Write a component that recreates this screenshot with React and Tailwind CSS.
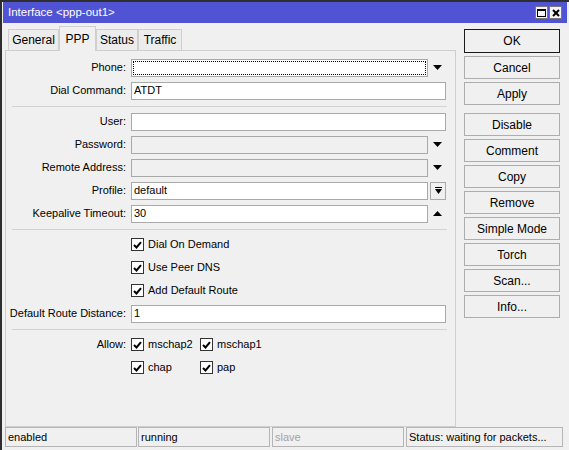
import React from "react";

/* SMALL DRAWINGS */
const DownArrow = () => (
  <svg width="9" height="5" viewBox="0 0 9 5">
    <polygon points="0,0 9,0 4.5,5" fill="#000" />
  </svg>
);

const UpArrow = () => (
  <svg width="9" height="5" viewBox="0 0 9 5">
    <polygon points="0,5 9,5 4.5,0" fill="#000" />
  </svg>
);

const CheckBox = () => (
  <span className="w-[13px] h-[13px] bg-white border border-[#333] flex items-center justify-center shrink-0">
    <svg width="9" height="8" viewBox="0 0 9 8">
      <path d="M1 4 L3.5 6.5 L8 1.2" stroke="#000" strokeWidth="2" fill="none" />
    </svg>
  </span>
);

const tabs = [
  { name: "General", w: "w-[51px]" },
  { name: "PPP", w: "w-[37px]", active: true },
  { name: "Status", w: "w-[42px]" },
  { name: "Traffic", w: "w-[44px]" },
];

const buttons = [
  ["Cancel", "mt-[3px]"],
  ["Apply", "mt-[3px]"],
  ["Disable", "mt-[8px]"],
  ["Comment", "mt-[3px]"],
  ["Copy", "mt-[3px]"],
  ["Remove", "mt-[3px]"],
  ["Simple Mode", "mt-[3px]"],
  ["Torch", "mt-[3px]"],
  ["Scan...", "mt-[3px]"],
  ["Info...", "mt-[3px]"],
];

/* ROW PIECES */
const Label = ({ children }) => (
  <span className="w-[121px] text-right shrink-0 pr-[1px]">{children}</span>
);

const Row = ({ label, children }) => (
  <div className="h-[23px] flex items-center">
    <Label>{label}</Label>
    <div className="flex-1 flex items-center ml-[4px] mr-[9px]">{children}</div>
  </div>
);

const Field = ({ value = "", disabled, focus }) => (
  <div
    className={`flex-1 h-[18px] border border-[#a9a9a9] flex items-center ${
      disabled ? "bg-[#f0f0f0]" : "bg-white"
    }`}
  >
    {focus ? (
      <div className="flex-1 self-stretch m-[1px] border border-dotted border-black" />
    ) : (
      <span className="pl-[2px]">{value}</span>
    )}
  </div>
);

const Separator = () => (
  <div className="h-[8px] flex items-center ml-[6px] mr-[8px]">
    <div className="flex-1 h-[1px] bg-[#d3d3d3]" />
  </div>
);

const CheckRow = ({ text }) => (
  <div className="h-[23px] flex items-center pl-[125px]">
    <CheckBox />
    <span className="ml-[4px]">{text}</span>
  </div>
);

export default function App() {
  return (
    <div className="w-[569px] h-[450px] bg-[#f0f0f0] border-l-2 border-t-2 border-[#2e2e2e] flex flex-col text-[11px] text-black font-['Liberation_Sans',Arial,sans-serif] overflow-hidden">
      {/* TITLE BAR */}
      <div className="h-[21px] ml-[1px] mr-[2px] bg-[#5053d3] flex items-center justify-between pl-[5px] pr-[5px]">
        <span className="text-white text-[11.5px]">Interface &lt;ppp-out1&gt;</span>
        <div className="flex gap-[1px]">
          <span className="w-[13px] h-[13px] bg-[#f4f4f4] border border-[#777] flex items-center justify-center">
            <span className="w-[9px] h-[8px] border border-black border-t-2" />
          </span>
          <span className="w-[13px] h-[13px] bg-[#f4f4f4] border border-[#777] flex items-center justify-center">
            <svg width="8" height="8" viewBox="0 0 8 8">
              <path d="M1 1 L7 7 M7 1 L1 7" stroke="#000" strokeWidth="2" />
            </svg>
          </span>
        </div>
      </div>

      {/* MAIN */}
      <div className="flex pl-[3px] pt-[4px]">
        <div className="w-[451px] flex flex-col">
          {/* TABS */}
          <div className="h-[23px] flex items-end pl-[3px]">
            {tabs.map((t) =>
              t.active ? (
                <div
                  key={t.name}
                  className={`${t.w} h-[25px] -mb-px relative z-10 bg-[#f0f0f0] border border-b-0 border-[#cfcfcf] flex items-center justify-center text-[12px]`}
                >
                  {t.name}
                </div>
              ) : (
                <div
                  key={t.name}
                  className={`${t.w} h-[21px] bg-[#ececec] border border-b-0 border-[#cfcfcf] flex items-center justify-center text-[12px]`}
                >
                  {t.name}
                </div>
              )
            )}
          </div>

          {/* PANEL */}
          <div className="h-[377px] border border-[#cfcfcf] pt-[5px] flex flex-col">
            <Row label="Phone:">
              <Field focus />
              <span className="w-[18px] flex justify-center"><DownArrow /></span>
            </Row>
            <Row label="Dial Command:">
              <Field value="ATDT" />
            </Row>
            <Separator />
            <Row label="User:">
              <Field />
            </Row>
            <Row label="Password:">
              <Field disabled />
              <span className="w-[18px] flex justify-center"><DownArrow /></span>
            </Row>
            <Row label="Remote Address:">
              <Field disabled />
              <span className="w-[18px] flex justify-center"><DownArrow /></span>
            </Row>
            <Row label="Profile:">
              <Field value="default" />
              <span className="w-[18px] flex justify-end">
                <span className="w-[16px] h-[18px] border border-[#a9a9a9] flex items-center justify-center">
                  <svg width="7" height="7" viewBox="0 0 7 7">
                    <rect x="0" y="0" width="7" height="1" fill="#000" />
                    <polygon points="0,2 7,2 3.5,7" fill="#000" />
                  </svg>
                </span>
              </span>
            </Row>
            <Row label="Keepalive Timeout:">
              <Field value="30" />
              <span className="w-[18px] flex justify-center"><UpArrow /></span>
            </Row>
            <Separator />
            <CheckRow text="Dial On Demand" />
            <CheckRow text="Use Peer DNS" />
            <CheckRow text="Add Default Route" />
            <Row label="Default Route Distance:">
              <Field value="1" />
            </Row>
            <Separator />
            <div className="h-[23px] flex items-center">
              <Label>Allow:</Label>
              <div className="ml-[4px] flex">
                <span className="w-[69px] flex items-center"><CheckBox /><span className="ml-[4px]">mschap2</span></span>
                <span className="flex items-center"><CheckBox /><span className="ml-[4px]">mschap1</span></span>
              </div>
            </div>
            <div className="h-[23px] flex items-center pl-[125px]">
              <span className="w-[69px] flex items-center"><CheckBox /><span className="ml-[4px]">chap</span></span>
              <span className="flex items-center"><CheckBox /><span className="ml-[4px]">pap</span></span>
            </div>
          </div>
        </div>

        {/* BUTTONS */}
        <div className="ml-[8px] w-[96px] pt-[2px] flex flex-col text-[12px]">
          <div className="h-[24px] border border-[#1a1a1a] bg-[#f0f0f0] flex items-center justify-center">OK</div>
          {buttons.map(([label, mt]) => (
            <div
              key={label}
              className={`${mt} h-[23px] border border-[#adadad] bg-[#f0f0f0] flex items-center justify-center`}
            >
              {label}
            </div>
          ))}
        </div>
      </div>

      {/* STATUS BAR */}
      <div className="flex pl-[3px] h-[20px]">
        <div className="w-[132px] border border-[#b5b5b5] flex items-center pl-[2px]">enabled</div>
        <div className="w-[132px] ml-[1px] border border-[#b5b5b5] flex items-center pl-[2px]">running</div>
        <div className="w-[132px] ml-[2px] border border-[#b5b5b5] flex items-center pl-[2px] text-[#a3a3a3]">slave</div>
        <div className="w-[157px] ml-[2px] border border-[#b5b5b5] flex items-center pl-[2px]">Status: waiting for packets...</div>
      </div>
    </div>
  );
}
